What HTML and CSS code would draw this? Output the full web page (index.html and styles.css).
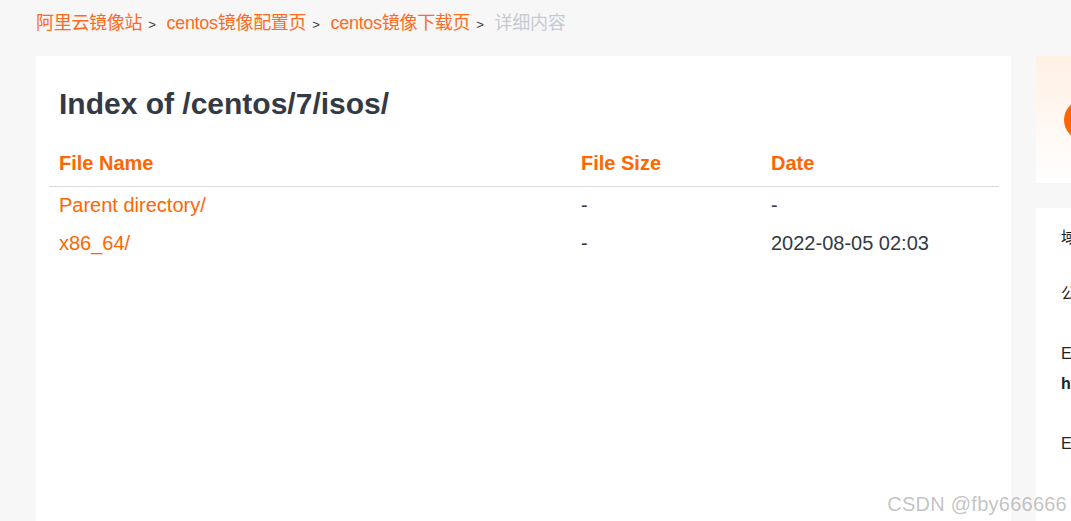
FILE: index.html
```html
<!DOCTYPE html>
<html lang="zh-CN">
<head>
    <meta charset="UTF-8">
    <meta name="viewport" content="width=device-width, initial-scale=1.0">
    <title>Index of /centos/7/isos/</title>
    <link rel="stylesheet" href="styles.css">
</head>
<body>
<div class="page">
    <div class="crumbs">
        <a href="#">阿里云镜像站</a><span class="sep">&gt;</span>
        <a href="#">centos镜像配置页</a><span class="sep">&gt;</span>
        <a href="#">centos镜像下载页</a><span class="sep">&gt;</span>
        <span class="current">详细内容</span>
    </div>
    <div class="columns">
        <div class="main-card">
            <h1>Index of /centos/7/isos/</h1>
            <table class="file-table">
                <thead>
                    <tr><th class="col-name">File Name</th><th class="col-size">File Size</th><th>Date</th></tr>
                </thead>
                <tbody>
                    <tr><td><a href="#">Parent directory/</a></td><td>-</td><td>-</td></tr>
                    <tr><td><a href="#">x86_64/</a></td><td>-</td><td>2022-08-05 02:03</td></tr>
                </tbody>
            </table>
        </div>
        <div class="side">
            <div class="side-top"><div class="logo-dot"></div></div>
            <div class="side-info">
                <p class="info-title">域名解析</p>
                <p class="info-sub">公共DNS</p>
                <p class="info-line">ECS 经典网络</p>
                <p class="info-url">http://mirrors.cloud.aliyuncs.com</p>
                <p class="info-last">ECS VPC 网络</p>
            </div>
        </div>
    </div>
</div>
<div class="watermark">CSDN @fby666666</div>
</body>
</html>
```

FILE: styles.css
```css
html, body {
    height: 100%;
}
body {
    margin: 0;
    overflow: hidden;
    background-color: #f7f7f7;
    color: #333a45;
    font-family: "Liberation Sans", "Noto Sans CJK SC", sans-serif;
}
a {
    color: #f60;
    text-decoration: none;
}
.page {
    padding: 0 0 0 36px;
    width: 1400px;
}
.crumbs {
    height: 56px;
    padding-top: 12px;
    box-sizing: border-box;
    font-size: 18px;
    line-height: 22px;
    letter-spacing: -0.3px;
}
.crumbs a {
    color: #ff6a1f;
}
.sep {
    font-size: 13px;
    margin: 0 6px 0 6px;
    letter-spacing: 0;
    color: #333a45;
}
.current {
    color: #c5cad1;
}
.columns {
    display: flex;
    align-items: flex-start;
    gap: 25px;
}
.main-card {
    width: 975px;
    height: 465px;
    flex-shrink: 0;
    background-color: #fff;
    padding: 30px 12px 0 13px;
    box-sizing: border-box;
}
h1 {
    margin: 0 0 18px 10px;
    font-size: 30px;
    line-height: 36px;
    font-weight: bold;
}
.file-table {
    width: 100%;
    table-layout: fixed;
    border-collapse: collapse;
    font-size: 20px;
}
.file-table th {
    text-align: left;
    color: #f60;
    font-weight: bold;
    height: 46px;
    padding: 0 0 0 10px;
    border-bottom: 1px solid #d9d9d9;
}
.file-table td {
    height: 38px;
    padding: 0 0 1px 10px;
    box-sizing: border-box;
}
.col-name {
    width: 512px;
}
.col-size {
    width: 180px;
}
.side {
    width: 300px;
    flex-shrink: 0;
}
.side-top {
    height: 127px;
    background: linear-gradient(#fff0e4, #fff);
    display: flex;
    align-items: center;
    padding-left: 28px;
    margin-bottom: 25px;
}
.logo-dot {
    width: 40px;
    height: 40px;
    border-radius: 50%;
    background-color: #f60;
}
.side-info {
    background-color: #fff;
    height: 313px;
    padding: 19px 25px 0;
    font-size: 16px;
    color: #222;
}
.side-info p {
    margin: 0;
    line-height: 22px;
}
.side-info .info-sub {
    margin-top: 34px;
}
.side-info .info-line {
    margin-top: 38px;
}
.side-info .info-url {
    margin-top: 8px;
    font-weight: bold;
}
.side-info .info-last {
    margin-top: 38px;
}
.watermark {
    position: absolute;
    right: 4px;
    bottom: 5px;
    font-size: 20px;
    line-height: 24px;
    letter-spacing: 0.25px;
    color: rgba(120, 120, 120, 0.45);
}
```
